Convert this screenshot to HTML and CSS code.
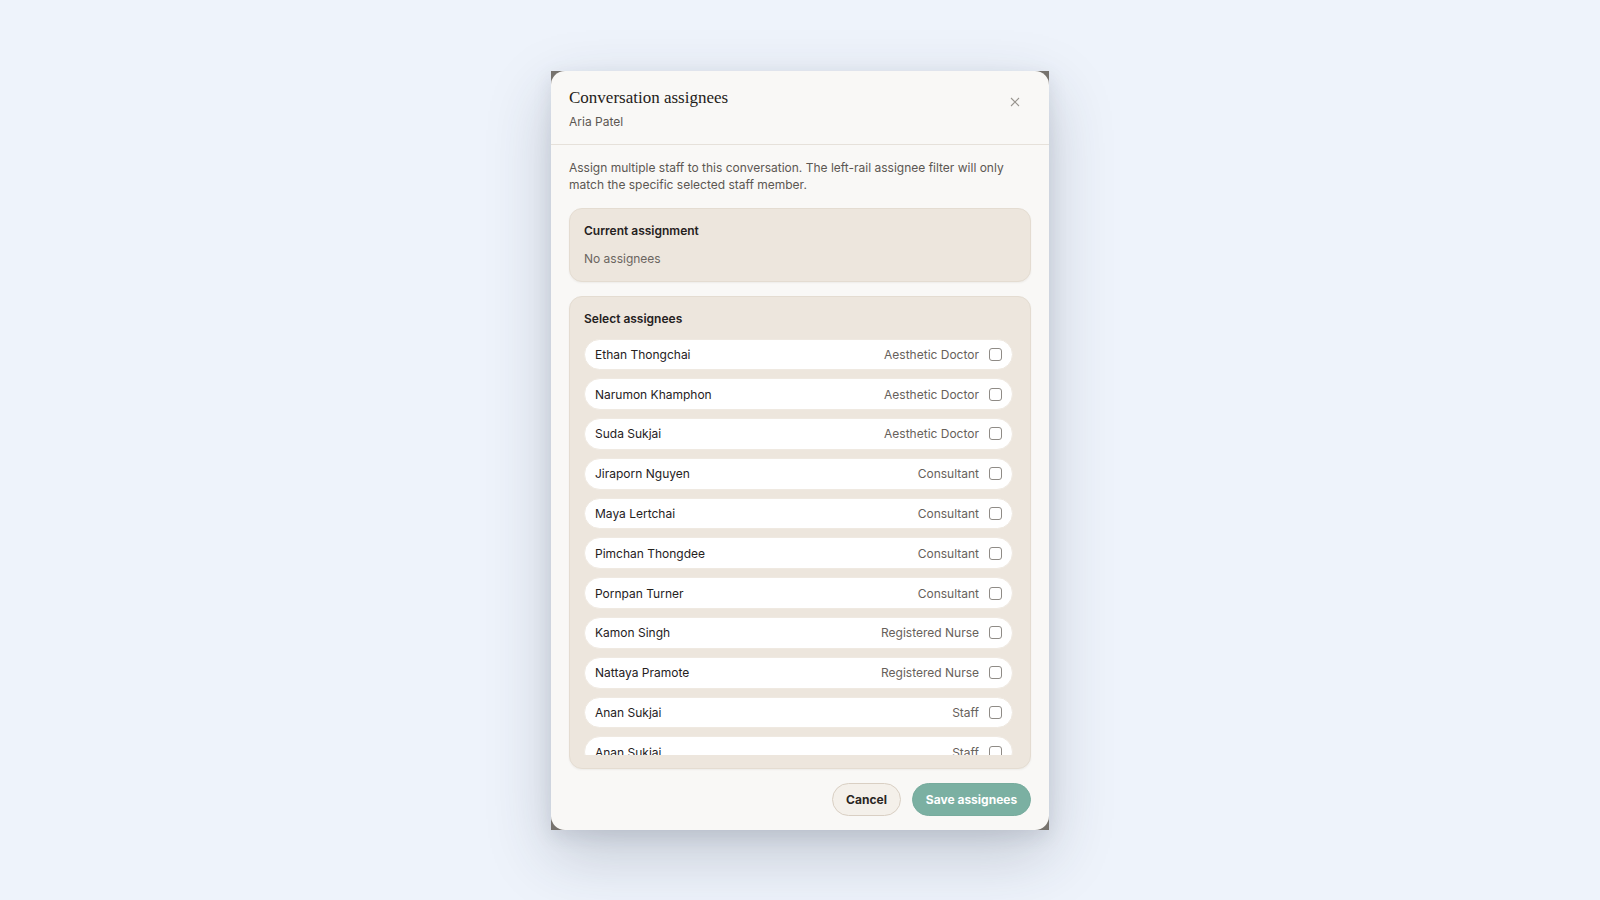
FILE: index.html
```html
<!DOCTYPE html>
<html lang="en">
<head>
    <meta charset="UTF-8">
    <meta name="viewport" content="width=device-width, initial-scale=1.0">
    <title>Conversation assignees</title>
    <link rel="stylesheet" href="styles.css">
</head>
<body>
    <div class="overlay">
        <div class="dialog-frame">
            <div class="dialog">
                <!-- Header: title, contact name, close button -->
                <div class="dialog-header">
                    <div>
                        <h2 class="dialog-title">Conversation assignees</h2>
                        <div class="dialog-subtitle">Aria Patel</div>
                    </div>
                    <button class="close-btn" aria-label="Close">
                        <svg width="10" height="10" viewBox="0 0 10 10">
                            <path d="M1 1L9 9M9 1L1 9" stroke="#9a9690" stroke-width="1.1" fill="none"/>
                        </svg>
                    </button>
                </div>

                <div class="dialog-body">
                    <p class="intro">Assign multiple staff to this conversation. The left-rail assignee filter will only match the specific selected staff member.</p>

                    <div class="panel panel-current">
                        <div class="panel-title">Current assignment</div>
                        <div class="panel-empty">No assignees</div>
                    </div>

                    <div class="panel panel-select">
                        <div class="panel-title">Select assignees</div>
                        <div class="staff-list">
                            <label class="staff-row"><span class="staff-name">Ethan Thongchai</span><span class="staff-role">Aesthetic Doctor</span><input type="checkbox"></label>
                            <label class="staff-row"><span class="staff-name">Narumon Khamphon</span><span class="staff-role">Aesthetic Doctor</span><input type="checkbox"></label>
                            <label class="staff-row"><span class="staff-name">Suda Sukjai</span><span class="staff-role">Aesthetic Doctor</span><input type="checkbox"></label>
                            <label class="staff-row"><span class="staff-name">Jiraporn Nguyen</span><span class="staff-role">Consultant</span><input type="checkbox"></label>
                            <label class="staff-row"><span class="staff-name">Maya Lertchai</span><span class="staff-role">Consultant</span><input type="checkbox"></label>
                            <label class="staff-row"><span class="staff-name">Pimchan Thongdee</span><span class="staff-role">Consultant</span><input type="checkbox"></label>
                            <label class="staff-row"><span class="staff-name">Pornpan Turner</span><span class="staff-role">Consultant</span><input type="checkbox"></label>
                            <label class="staff-row"><span class="staff-name">Kamon Singh</span><span class="staff-role">Registered Nurse</span><input type="checkbox"></label>
                            <label class="staff-row"><span class="staff-name">Nattaya Pramote</span><span class="staff-role">Registered Nurse</span><input type="checkbox"></label>
                            <label class="staff-row"><span class="staff-name">Anan Sukjai</span><span class="staff-role">Staff</span><input type="checkbox"></label>
                            <label class="staff-row"><span class="staff-name">Anan Sukjai</span><span class="staff-role">Staff</span><input type="checkbox"></label>
                            <label class="staff-row"><span class="staff-name">Chai Wongsa</span><span class="staff-role">Staff</span><input type="checkbox"></label>
                        </div>
                    </div>

                    <div class="dialog-actions">
                        <button class="btn btn-cancel">Cancel</button>
                        <button class="btn btn-save">Save assignees</button>
                    </div>
                </div>
            </div>
        </div>
    </div>
</body>
</html>
```

FILE: styles.css
```css
/* Page reset */
body {
    margin: 0;
    padding: 0;
    background: #eef3fb;
    font-family: Inter, "Noto Sans", sans-serif;
    color: #2a2622;
}

/* Centers the dialog in the viewport */
.overlay {
    display: flex;
    justify-content: center;
    align-items: center;
    height: 100vh;
    width: 100vw;
}

.dialog-frame {
    width: 498px;
    height: 759px;
    background: #77736e;
    box-shadow: 0 24px 60px rgba(40, 50, 70, 0.22), 0 6px 18px rgba(40, 50, 70, 0.10);
}

.dialog {
    display: flex;
    flex-direction: column;
    height: 100%;
    background: #f9f8f6;
    border-radius: 14px;
    overflow: hidden;
}

/* Header */
.dialog-header {
    display: flex;
    justify-content: space-between;
    align-items: flex-start;
    padding: 16px 18px 14px;
    border-bottom: 1px solid #e6e1da;
}

.dialog-title {
    margin: 0;
    font-family: "Liberation Serif", Georgia, serif;
    font-size: 17px;
    font-weight: normal;
    line-height: 22px;
    color: #1f1c19;
}

.dialog-subtitle {
    margin-top: 4px;
    font-size: 12px;
    line-height: 17px;
    color: #5c5752;
}

.close-btn {
    margin-top: 10px;
    margin-right: 11px;
    padding: 0;
    border: none;
    background: transparent;
    line-height: 0;
    cursor: pointer;
}

/* Body */
.dialog-body {
    flex: 1;
    display: flex;
    flex-direction: column;
    min-height: 0;
    padding: 14px 18px 14px;
}

.intro {
    margin: 0 0 14px;
    font-size: 12px;
    line-height: 17.5px;
    color: #5c5752;
}

.panel {
    background: #ede6dd;
    border: 1px solid #e4dcd1;
    border-radius: 13px;
    padding: 14px;
    box-shadow: 0 1px 2px rgba(60, 45, 30, 0.06);
    margin-bottom: 14px;
}

.panel-current {
    padding-top: 13px;
    padding-bottom: 13px;
}

.panel-title {
    font-size: 12px;
    font-weight: 600;
    line-height: 18px;
    color: #25211d;
}

.panel-empty {
    margin-top: 10px;
    font-size: 12px;
    line-height: 18px;
    color: #6b655f;
}

.panel-select {
    flex: 1;
    display: flex;
    flex-direction: column;
    min-height: 0;
    padding-top: 14px;
    padding-bottom: 13px;
}

.panel-select .panel-title {
    line-height: 16px;
}

.staff-list {
    flex: 1;
    min-height: 0;
    overflow: hidden;
    display: flex;
    flex-direction: column;
    gap: 8px;
    margin-top: 12px;
    padding-right: 3px;
}

.staff-row {
    flex-shrink: 0;
    display: flex;
    align-items: center;
    height: 31.8px;
    box-sizing: border-box;
    padding: 0 10px;
    background: #ffffff;
    border: 1px solid #efe9e1;
    border-radius: 16px;
    font-size: 12px;
}

.staff-name {
    flex: 1;
    color: #25211d;
}

.staff-role {
    color: #67615b;
    margin-right: 10px;
}

.staff-row input[type="checkbox"] {
    appearance: none;
    margin: 0;
    width: 13px;
    height: 13px;
    border: 1px solid #8f8b86;
    border-radius: 3px;
    background: #fff;
}

/* Footer buttons */
.dialog-actions {
    display: flex;
    justify-content: flex-end;
    gap: 11px;
}

.btn {
    height: 33px;
    border-radius: 17px;
    font-family: Inter, "Noto Sans", sans-serif;
    font-size: 12px;
    font-weight: 700;
    cursor: pointer;
}

.btn-cancel {
    width: 69px;
    background: #f4f0ea;
    border: 1px solid #d9cfc3;
    color: #2a2622;
}

.btn-save {
    width: 119px;
    background: #7bb0a2;
    border: 1px solid #77ab9d;
    color: #ffffff;
}
```
